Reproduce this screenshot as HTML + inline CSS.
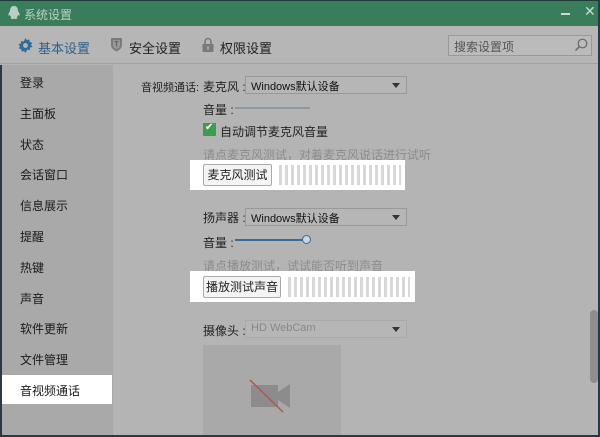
<!DOCTYPE html>
<html><head><meta charset="utf-8"><style>
*{margin:0;padding:0;box-sizing:border-box}
body{width:600px;height:437px;overflow:hidden;background:#b4b4b4;font-family:"Liberation Sans","Noto Sans CJK SC",sans-serif;font-size:12px;color:#222;position:relative}
.a{position:absolute;white-space:nowrap}
.title{left:0;top:0;width:600px;height:26px;background:#3a7d5b;border-top:1px solid #1e3a3a}
.tb{left:0;top:26px;width:600px;height:38px;background:#b6b6b6;border-bottom:1px solid #a0a0a0}
.side{left:0;top:65px;width:113px;height:372px;background:#a9a9a9;border-left:2px solid #2a3848}
.si{left:20px;font-size:12px;color:#1a1a1a}
.sel{border:1px solid #999;background:#b6b6b6;height:18px;width:162px;font-size:11px;padding:1px 5px;color:#111}
.sel:after{content:"";position:absolute;right:6px;top:6px;border:4px solid transparent;border-top:5px solid #333}
.bars{height:20px;background:repeating-linear-gradient(90deg,#d8d8d8 0 3px,#fff 3px 6px)}
.btn{border:1px solid #aaa;background:#f4f4f4;height:22px;font-size:12px;text-align:center;line-height:20px;border-radius:2px}
.hint{color:#8c8c8c;font-size:12px}
</style></head><body>
<div class="a title"></div>
<svg class="a" style="left:7px;top:5px" width="14" height="16" viewBox="0 0 14 16"><path d="M7 1C4 1 3 3.5 3 6c-1 1.5-2 3-1.5 4.5.5.5 1-.3 1.3-.8.3 1.2 1 2 1.7 2.5-1 .5-1.5 1.5.5 1.8 1 .1 1.5-.2 2-.5.5.3 1 .6 2 .5 2-.3 1.5-1.3.5-1.8.7-.5 1.4-1.3 1.7-2.5.3.5.8 1.3 1.3.8C13 9 12 7.5 11 6c0-2.5-1-5-4-5z" fill="#b9cfc4"/></svg>
<div class="a" style="left:24px;top:6px;color:#b9d3c4;font-size:12px">系统设置</div>
<div class="a" style="left:561px;top:13px;width:9px;height:2px;background:#c8dcd0"></div>
<div class="a" style="left:584px;top:3px;color:#c8dcd0;font-size:14px">✕</div>
<div class="a tb"></div>
<svg class="a" style="left:18px;top:38px" width="15" height="15" viewBox="0 0 16 16"><path d="M8 0l1.5 2.2 2.6-.7.4 2.7 2.6.8-1.2 2.4L15.5 9.5l-2.6.8-.4 2.7-2.6-.7L8 16 6.5 13.8l-2.6.7-.4-2.7-2.6-.8 1.2-2.4L.5 6.5l2.6-.8.4-2.7 2.6.7z" fill="#2f6c9c"/><circle cx="8" cy="8" r="2.6" fill="#b6b6b6"/></svg>
<div class="a" style="left:38px;top:38px;color:#2f5f8c;font-size:13px">基本设置</div>
<svg class="a" style="left:110px;top:37px" width="13" height="15" viewBox="0 0 13 15"><path d="M1 1h11v7c0 3-2.5 5-5.5 6.5C3.5 13 1 11 1 8z" fill="#7a7a7a"/><path d="M3 3h7v5c0 2-1.5 3.3-3.5 4.3C4.5 11.3 3 10 3 8z" fill="#9a9a9a"/><path d="M4.5 4.5h4M6.5 4.5v5" stroke="#666" stroke-width="1.3"/></svg>
<div class="a" style="left:129px;top:38px;color:#222;font-size:13px">安全设置</div>
<svg class="a" style="left:202px;top:37px" width="12" height="15" viewBox="0 0 12 15"><path d="M3 7V4.5a3 3 0 016 0V7" stroke="#7a7a7a" stroke-width="1.6" fill="none"/><rect x="0.5" y="7" width="11" height="8" fill="#7a7a7a"/><rect x="5" y="9.5" width="2" height="3" fill="#aaa"/></svg>
<div class="a" style="left:220px;top:38px;color:#222;font-size:13px">权限设置</div>
<div class="a" style="left:448px;top:35px;width:144px;height:21px;border:1px solid #999;background:#bbb"></div>
<div class="a" style="left:454px;top:38px;color:#555;font-size:12px">搜索设置项</div>
<svg class="a" style="left:574px;top:38px" width="14" height="14" viewBox="0 0 14 14"><circle cx="8.5" cy="5.5" r="4.3" stroke="#666" stroke-width="1.2" fill="none"/><path d="M5.5 8.5L1.5 12.5" stroke="#666" stroke-width="1.4"/></svg>
<div class="a side"></div>
<div class="a si" style="top:74px">登录</div>
<div class="a si" style="top:105px">主面板</div>
<div class="a si" style="top:136px">状态</div>
<div class="a si" style="top:166px">会话窗口</div>
<div class="a si" style="top:197px">信息展示</div>
<div class="a si" style="top:228px">提醒</div>
<div class="a si" style="top:259px">热键</div>
<div class="a si" style="top:290px">声音</div>
<div class="a si" style="top:320px">软件更新</div>
<div class="a si" style="top:351px">文件管理</div>
<div class="a" style="left:2px;top:375px;width:110px;height:29px;background:#fff"></div>
<div class="a si" style="top:382px">音视频通话</div>
<div class="a" style="left:141px;top:79px;font-size:11px">音视频通话:</div>
<div class="a" style="left:203px;top:78px">麦克风 :</div>
<div class="a sel" style="left:245px;top:76px">Windows默认设备</div>
<div class="a" style="left:203px;top:101px">音量 :</div>
<div class="a" style="left:235px;top:107px;width:75px;height:2px;background:#8a98a8"></div>
<div class="a" style="left:203px;top:123px;width:13px;height:13px;background:#3f9b4f"></div>
<div class="a" style="left:205px;top:122px;color:#fff;font-size:10px">✔</div>
<div class="a" style="left:220px;top:123px">自动调节麦克风音量</div>
<div class="a hint" style="left:203px;top:146px">请点麦克风测试，对着麦克风说话进行试听</div>
<div class="a" style="left:190px;top:160px;width:215px;height:30px;background:#fff"></div>
<div class="a btn" style="left:203px;top:164px;width:69px">麦克风测试</div>
<div class="a bars" style="left:279px;top:165px;width:122px"></div>
<div class="a" style="left:203px;top:209px">扬声器 :</div>
<div class="a sel" style="left:245px;top:208px">Windows默认设备</div>
<div class="a" style="left:203px;top:234px">音量 :</div>
<div class="a" style="left:235px;top:239px;width:68px;height:2px;background:#3a6a98"></div>
<div class="a" style="left:302px;top:235px;width:9px;height:9px;border:1px solid #3a6a98;border-radius:50%;background:#c8d4e0"></div>
<div class="a hint" style="left:203px;top:257px">请点播放测试，试试能否听到声音</div>
<div class="a" style="left:190px;top:271px;width:225px;height:31px;background:#fff"></div>
<div class="a btn" style="left:203px;top:276px;width:78px">播放测试声音</div>
<div class="a bars" style="left:288px;top:277px;width:122px"></div>
<div class="a" style="left:203px;top:322px">摄像头 :</div>
<div class="a sel" style="left:245px;top:320px;color:#888;border-color:#aaa">HD WebCam</div>
<div class="a" style="left:203px;top:345px;width:138px;height:92px;background:#a9a9a9"></div>
<svg class="a" style="left:248px;top:378px" width="46" height="36" viewBox="0 0 46 36"><rect x="3" y="7" width="27" height="22" fill="#8c8c8c"/><path d="M30 14l12-8v24l-12-8z" fill="#8c8c8c"/><path d="M2 2l33 32" stroke="#b0584a" stroke-width="1.5"/></svg>
<div class="a" style="left:590px;top:310px;width:8px;height:73px;background:#8e8e8e;border-radius:4px"></div>
<div class="a" style="left:0;top:435px;width:600px;height:2px;background:#2a3848"></div>
<div class="a" style="left:598px;top:0;width:2px;height:437px;background:#2a3848"></div>
</body></html>
